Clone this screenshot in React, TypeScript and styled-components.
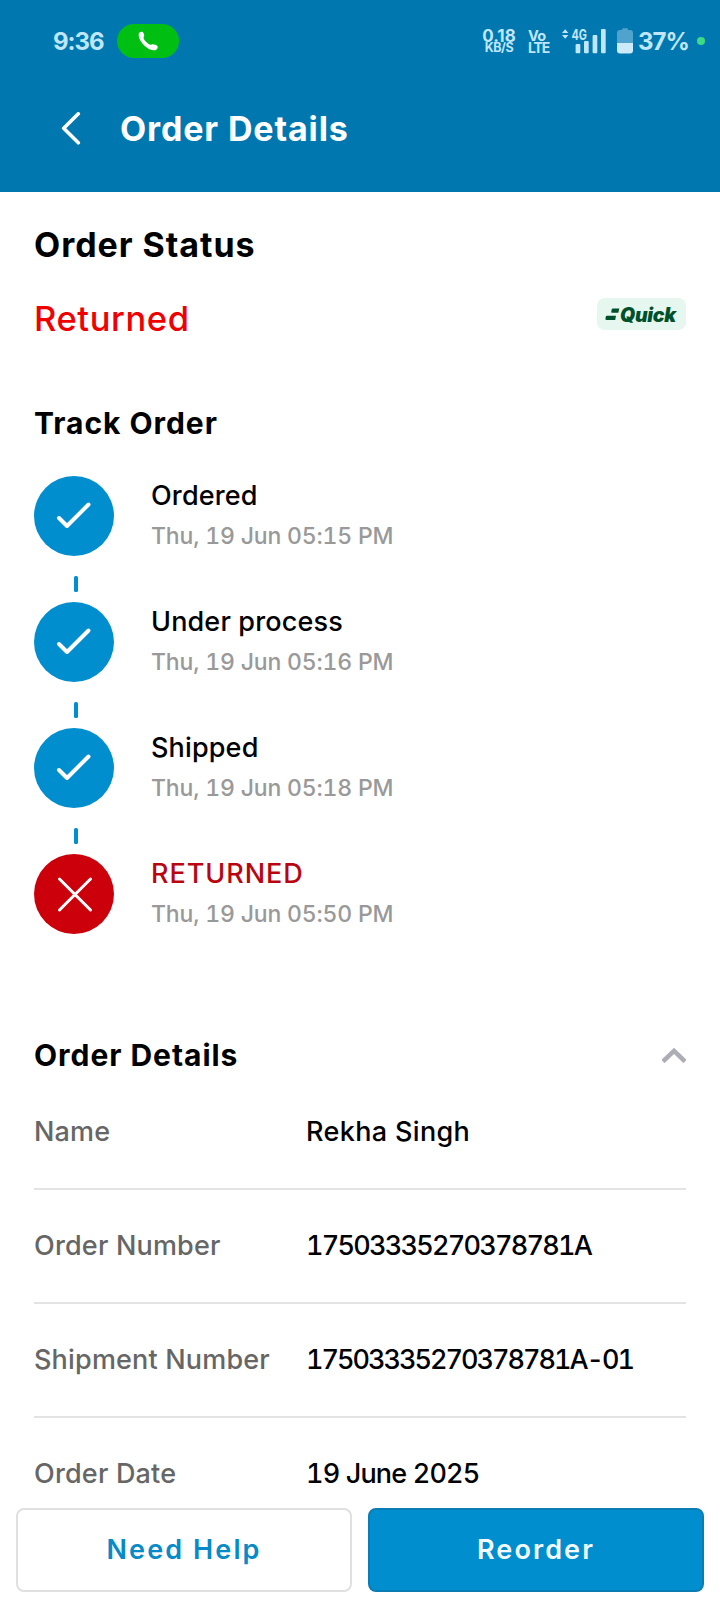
import React from 'react';
import styled, { createGlobalStyle } from 'styled-components';

const GlobalStyle = createGlobalStyle`
  * { box-sizing: border-box; }
  body {
    margin: 0;
    background: #fff;
    font-family: Inter, "Liberation Sans", sans-serif;
    color: #000;
  }
`;

const Screen = styled.div`
  display: flex;
  flex-direction: column;
  width: 720px;
  height: 1604px;
  overflow: hidden;
  background: #fff;
`;

const TopArea = styled.header`
  flex: none;
  height: 192px;
  background: #0078af;
`;

const StatusBar = styled.div`
  display: flex;
  align-items: center;
  justify-content: space-between;
  height: 82px;
  padding: 0 15px 0 53px;
  color: #bfe6fb;
`;

const StatusGroup = styled.div`
  display: flex;
  align-items: center;
`;

const Clock = styled.span`
  width: 64px;
  font-size: 24px;
  font-weight: 700;
  letter-spacing: -1px;
`;

const CallPill = styled.span`
  display: flex;
  align-items: center;
  justify-content: center;
  width: 62px;
  height: 34px;
  border-radius: 17px;
  background: #00bf13;
`;

const MiniStack = styled.span<{ $width: number; $gap: number; $centered?: boolean }>`
  display: flex;
  flex-direction: column;
  align-items: ${(p) => (p.$centered ? 'center' : 'flex-start')};
  width: ${(p) => p.$width}px;
  margin-right: ${(p) => p.$gap}px;
  padding-top: 2px;
`;

const MiniText = styled.span<{ $size: number; $tracking?: number }>`
  font-size: ${(p) => p.$size}px;
  font-weight: 700;
  line-height: 12px;
  white-space: nowrap;
  letter-spacing: ${(p) => p.$tracking ?? 0}px;
`;

const SignalIcon = styled.svg`
  display: block;
  margin-right: 11px;
  overflow: visible;
`;

const BatteryIcon = styled.svg`
  display: block;
  margin-right: 5px;
`;

const Percent = styled.span`
  width: 59px;
  padding-top: 1px;
  font-size: 24px;
  font-weight: 700;
  line-height: 26px;
  letter-spacing: -1px;
`;

const PrivacyDot = styled.span`
  width: 8px;
  height: 8px;
  border-radius: 50%;
  background: #3ddc84;
`;

const NavBar = styled.div`
  display: flex;
  align-items: center;
  gap: 38px;
  height: 93px;
  padding-left: 61px;
`;

const NavTitle = styled.h1`
  margin: 0;
  color: #fff;
  font-size: 34px;
  font-weight: 700;
  letter-spacing: 0.86px;
  line-height: 44px;
`;

const Content = styled.main`
  flex: 1;
  min-height: 0;
  padding: 31px 34px 0;
`;

const Heading = styled.h2<{ $size: number }>`
  margin: 0;
  font-size: ${(p) => p.$size}px;
  font-weight: 660;
  line-height: 44px;
  letter-spacing: 0.96px;
`;

const StatusRow = styled.div`
  display: flex;
  justify-content: space-between;
  margin: 30px 0 60px;
`;

const StatusText = styled.span`
  color: #f00000;
  font-size: 34.5px;
  font-weight: 500;
  line-height: 44px;
  letter-spacing: 0.6px;
`;

const QuickBadge = styled.span`
  display: flex;
  align-items: center;
  width: 89px;
  height: 32px;
  margin-top: 1px;
  padding: 2px 0 0 8px;
  border-radius: 8px;
  background: #e5f7ee;
  color: #00502b;
  font-size: 19.5px;
  font-weight: 900;
  font-style: italic;
  letter-spacing: -0.25px;
`;

const Timeline = styled.ol`
  margin: 31px 0 0;
  padding: 0;
  list-style: none;
`;

const Step = styled.li`
  display: flex;
  height: 126px;
`;

const StepRail = styled.div`
  display: flex;
  flex-direction: column;
  width: 117px;
`;

const StepMark = styled.span<{ $failed: boolean }>`
  display: flex;
  width: 80px;
  height: 80px;
  border-radius: 50%;
  background: ${(p) => (p.$failed ? '#cc000b' : '#008ecf')};
`;

const Connector = styled.span`
  width: 4px;
  height: 16px;
  margin: 20px 0 0 40px;
  border-radius: 1.5px;
  background: #008ecf;
`;

const StepBody = styled.div`
  display: flex;
  flex-direction: column;
  padding-top: 2px;
`;

const StepName = styled.span<{ $failed: boolean }>`
  font-size: 27px;
  font-weight: 500;
  line-height: 36px;
  letter-spacing: ${(p) => (p.$failed ? 0.95 : 0.15)}px;
  color: ${(p) => (p.$failed ? '#b9050f' : '#000')};
`;

const StepTime = styled.span`
  margin-top: 6px;
  color: #999;
  font-size: 23px;
  font-weight: 500;
  line-height: 32px;
  font-variant-numeric: tabular-nums;
  letter-spacing: -0.17px;
`;

const DetailsHeader = styled.div`
  display: flex;
  align-items: center;
  justify-content: space-between;
  height: 44px;
  margin-top: 53px;
`;

const DetailsList = styled.dl`
  margin: 0;
`;

const DetailRow = styled.div<{ $first: boolean }>`
  display: flex;
  height: ${(p) => (p.$first ? 113 : 114)}px;
  padding-top: ${(p) => (p.$first ? 37 : 38)}px;
  border-bottom: 2px solid #e3e3e3;
  font-size: 27px;
  font-weight: 500;
  line-height: 36px;
  white-space: nowrap;
`;

const Label = styled.dt`
  flex: none;
  width: 272px;
  color: #666;
  letter-spacing: 0.18px;
`;

const Value = styled.dd<{ $tracking: number }>`
  margin: 0;
  font-variant-numeric: tabular-nums;
  letter-spacing: ${(p) => p.$tracking}px;
`;

const ActionBar = styled.footer`
  flex: none;
  display: flex;
  gap: 16px;
  height: 100px;
  padding: 4px 16px 12px;
  background: #fff;
`;

const ActionButton = styled.button<{ $primary?: boolean }>`
  flex: 1;
  padding: 0;
  border: 2px solid ${(p) => (p.$primary ? '#0b7db5' : '#e0e0e0')};
  border-radius: 8px;
  background: ${(p) => (p.$primary ? '#008ecf' : '#fff')};
  color: ${(p) => (p.$primary ? '#f2fbff' : '#078bc8')};
  font: 600 27px/36px Inter, "Liberation Sans", sans-serif;
  letter-spacing: 2.1px;
`;

const steps = [
  { name: 'Ordered', time: 'Thu, 19 Jun 05:15 PM' },
  { name: 'Under process', time: 'Thu, 19 Jun 05:16 PM' },
  { name: 'Shipped', time: 'Thu, 19 Jun 05:18 PM' },
  { name: 'RETURNED', time: 'Thu, 19 Jun 05:50 PM', failed: true },
];

const details = [
  { label: 'Name', value: 'Rekha Singh', tracking: 0.35 },
  { label: 'Order Number', value: '17503335270378781A', tracking: -1.75 },
  { label: 'Shipment Number', value: '17503335270378781A-01', tracking: -2 },
  { label: 'Order Date', value: '19 June 2025', tracking: -0.83 },
];

function MarkGlyph({ failed }: { failed: boolean }) {
  return (
    <svg width="80" height="80" viewBox="0 0 80 80" fill="none" stroke="#fff" strokeLinecap="round">
      {failed ? (
        <path d="M25.5 25L56.5 56M56.5 25L25.5 56" strokeWidth="3" />
      ) : (
        <path d="M25 42L33 50L54.500 28.500" strokeWidth="4" strokeLinejoin="round" />
      )}
    </svg>
  );
}

export default function App() {
  return (
    <Screen>
      <GlobalStyle />
      <TopArea>
        <StatusBar>
          <StatusGroup>
            <Clock>9:36</Clock>
            <CallPill>
              <svg width="20" height="20" viewBox="0 0 20 20" fill="#fff">
                <path d="M.8 2.500C1.400 1 3.500.2 4.700 1c1 .8 1.700 3 1.400 4.200-.2.800-.8 1.200-.5 2.100.8 2.400 4.400 5.700 6.600 6.400.9.300 1.400-.5 2.400-.5 1.700 0 4.500.8 5 2 .5 1.300-.6 3.600-2.500 4C10.300 20.300-.7 9.700.8 2.500z" />
              </svg>
            </CallPill>
          </StatusGroup>
          <StatusGroup>
            <MiniStack $width={34} $gap={12} $centered>
              <MiniText $size={17}>0.18</MiniText>
              <MiniText $size={12.5} $tracking={-0.4}>KB/S</MiniText>
            </MiniStack>
            <MiniStack $width={24} $gap={10}>
              <MiniText $size={14.5} $tracking={-0.7}>Vo</MiniText>
              <MiniText $size={14} $tracking={-1.1}>LTE</MiniText>
            </MiniStack>
            <SignalIcon width="44" height="26" viewBox="0 0 44 26" fill="#bfe6fb">
              <path d="M0 5L3.200 1.200L6.400 5zM0 7L3.200 10.800L6.400 7z" />
              <text x="9.500" y="11.500" fontFamily="Inter, sans-serif" fontSize="14.500" fontWeight="700" textLength="15.500" lengthAdjust="spacingAndGlyphs">4G</text>
              <rect x="13.600" y="16" width="4.700" height="9.300" rx="1" />
              <rect x="22" y="13" width="4.700" height="12.300" rx="1" />
              <rect x="30.600" y="7" width="4.700" height="18.300" rx="1" />
              <rect x="39" y="1" width="4.700" height="24.300" rx="1" />
            </SignalIcon>
            <BatteryIcon width="16" height="26" viewBox="0 0 16 26">
              <path d="M5 2V1.500Q5 .3 6.200 .3H9.800Q11 .3 11 1.500V2H13Q16 2 16 5V15H0V5Q0 2 3 2z" fill="#4fa3cc" />
              <path d="M0 15H16V22.500Q16 25.500 13 25.500H3Q0 25.500 0 22.500z" fill="#cdeafa" />
            </BatteryIcon>
            <Percent>37%</Percent>
            <PrivacyDot />
          </StatusGroup>
        </StatusBar>
        <NavBar>
          <svg width="21" height="34" viewBox="0 0 21 34" fill="none" stroke="#fff" strokeWidth="3.600" strokeLinecap="round" strokeLinejoin="round">
            <path d="M17.300 1.800L2.700 16.300L17.300 30.800" />
          </svg>
          <NavTitle>Order Details</NavTitle>
        </NavBar>
      </TopArea>
      <Content>
        <Heading $size={34}>Order Status</Heading>
        <StatusRow>
          <StatusText>Returned</StatusText>
          <QuickBadge>
            <svg width="15" height="16" viewBox="0 0 15 16" fill="#00502b">
              <path d="M8 1.500H14.300L13.300 5.800H7Q6 5.800 6.300 4.700L6.600 2.700Q6.800 1.500 8 1.500z" />
              <path d="M2 8.800H11L10.200 13H1.500Q.3 13 .5 11.700L.7 10Q.9 8.800 2 8.800z" />
            </svg>
            Quick
          </QuickBadge>
        </StatusRow>
        <Heading $size={30}>Track Order</Heading>
        <Timeline>
          {steps.map((step, i) => (
            <Step key={step.name}>
              <StepRail>
                <StepMark $failed={!!step.failed}>
                  <MarkGlyph failed={!!step.failed} />
                </StepMark>
                {i < steps.length - 1 && <Connector />}
              </StepRail>
              <StepBody>
                <StepName $failed={!!step.failed}>{step.name}</StepName>
                <StepTime>{step.time}</StepTime>
              </StepBody>
            </Step>
          ))}
        </Timeline>
        <DetailsHeader>
          <Heading $size={30}>Order Details</Heading>
          <svg width="24" height="16" viewBox="0 0 24 16" fill="none" stroke="#adadb6" strokeWidth="4.500">
            <path d="M1 14.500L12 3.800L23 14.500" />
          </svg>
        </DetailsHeader>
        <DetailsList>
          {details.map((d, i) => (
            <DetailRow key={d.label} $first={i === 0}>
              <Label>{d.label}</Label>
              <Value $tracking={d.tracking}>{d.value}</Value>
            </DetailRow>
          ))}
        </DetailsList>
      </Content>
      <ActionBar>
        <ActionButton>Need Help</ActionButton>
        <ActionButton $primary>Reorder</ActionButton>
      </ActionBar>
    </Screen>
  );
}
